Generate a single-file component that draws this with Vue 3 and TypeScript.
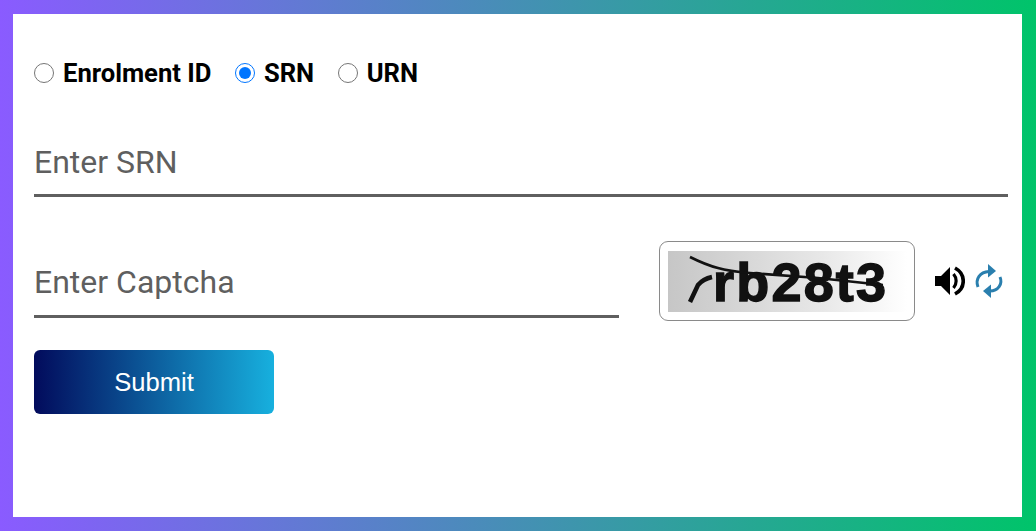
<script setup lang="ts">
import { ref } from 'vue'

const options: string[] = ['Enrolment ID', 'SRN', 'URN']
const selected = ref<string>('SRN')
const srn = ref<string>('')
const captcha = ref<string>('')
</script>

<template>
  <div class="frame">
    <form class="panel" @submit.prevent>
      <div class="radios">
        <label v-for="o in options" :key="o" class="radio">
          <input v-model="selected" type="radio" name="idType" :value="o" />
          <span>{{ o }}</span>
        </label>
      </div>

      <input v-model="srn" class="field srn" type="text" placeholder="Enter SRN" />

      <div class="captcha-row">
        <input v-model="captcha" class="field captcha-input" type="text" placeholder="Enter Captcha" />
        <div class="captcha-box">
          <div class="captcha-img">
            <span class="captcha-text">rb28t3</span>
            <svg class="captcha-lines" viewBox="0 0 239 61" aria-hidden="true">
              <path d="M22 6 C34 12 42 15 50 17 C60 20 70 21 82 22 L150 27 L215 34" fill="none" stroke="#111" stroke-width="2.6" />
              <path d="M22 51 L30 34 Q35 28 44 26" fill="none" stroke="#111" stroke-width="4.5" />
            </svg>
          </div>
        </div>
        <div class="captcha-icons">
          <svg class="icon" viewBox="0 0 30 30" aria-label="Play audio">
            <path d="M0 10 H6 L15 1 V29 L6 20 H0 Z" fill="#000" />
            <path d="M18.5 8 C22 12 22 18 18.5 22" fill="none" stroke="#000" stroke-width="3.2" />
            <path d="M20 2 C31 8 31 22 20 28" fill="none" stroke="#000" stroke-width="3.6" />
          </svg>
          <svg class="refresh" viewBox="0 0 26 34" aria-label="Refresh captcha">
            <path d="M2 23 C-1 15 4 8 13 7.5" fill="none" stroke="#2a7fae" stroke-width="3" />
            <path d="M12 0 L20 7 L12 13.5 Z" fill="#2a7fae" />
            <path d="M24 13 C27 20 22 27 14 27" fill="none" stroke="#2a7fae" stroke-width="3" />
            <path d="M15 20.5 L7 27 L15 34 Z" fill="#2a7fae" />
          </svg>
        </div>
      </div>

      <button class="submit" type="submit">Submit</button>
    </form>
  </div>
</template>

<style>
html, body { margin: 0; padding: 0; }
</style>

<style scoped>
.frame {
  box-sizing: border-box;
  width: 1036px;
  height: 531px;
  padding: 14px 14px 14px 13px;
  background: linear-gradient(90deg, #8a5bff 0%, #00c46a 100%);
}
.panel {
  box-sizing: border-box;
  height: 100%;
  padding: 47px 14px 0 21px;
  background: #fff;
  font-family: Roboto, sans-serif;
}
.radios {
  display: flex;
  gap: 23.5px;
  height: 24px;
}
.radio {
  display: flex;
  align-items: center;
  gap: 9px;
  font-weight: 700;
  font-size: 25.6px;
  color: #000;
}
.radio input {
  width: 20px;
  height: 20px;
  margin: 0;
}
.field {
  display: block;
  box-sizing: border-box;
  border: 0;
  border-bottom: 3px solid #5f5f5f;
  outline: none;
  background: transparent;
  padding: 4px 0 0;
  font-family: Roboto, sans-serif;
  font-size: 32px;
  color: #333;
}
.field::placeholder { color: #5f5f5f; opacity: 1; }
.srn {
  width: 100%;
  height: 72px;
  margin-top: 40px;
}
.captcha-row {
  display: flex;
  align-items: flex-start;
  margin-top: 44px;
}
.captcha-input {
  width: 585px;
  height: 77px;
  padding-top: 8px;
  flex: none;
}
.captcha-box {
  flex: none;
  box-sizing: border-box;
  width: 256px;
  height: 80px;
  margin-left: 40px;
  padding: 9px 8px;
  border: 1px solid #8a8a8a;
  border-radius: 9px;
}
.captcha-img {
  position: relative;
  width: 239px;
  height: 61px;
  overflow: hidden;
  background: linear-gradient(90deg, #c6c6c6 0%, #e8e8e8 65%, #ffffff 100%);
}
.captcha-text {
  position: absolute;
  left: 45px;
  top: 1px;
  font-family: "Liberation Sans", sans-serif;
  font-weight: 700;
  font-size: 54px;
  line-height: 60px;
  letter-spacing: 2.2px;
  color: #111;
  -webkit-text-stroke: 1.4px #111;
}
.captcha-lines {
  position: absolute;
  left: 0;
  top: 0;
  width: 239px;
  height: 61px;
}
.captcha-icons {
  display: flex;
  align-items: center;
  gap: 11px;
  margin-left: 20px;
  height: 80px;
}
.icon { width: 30px; height: 30px; flex: none; }
.refresh { width: 26px; height: 34px; flex: none; overflow: visible; }
.submit {
  display: block;
  width: 240px;
  height: 64px;
  margin-top: 29px;
  border: 0;
  border-radius: 6px;
  background: linear-gradient(90deg, #020b5c 0%, #17b0de 100%);
  color: #fff;
  font-family: "Liberation Sans", Arial, sans-serif;
  font-size: 25.6px;
}
</style>
